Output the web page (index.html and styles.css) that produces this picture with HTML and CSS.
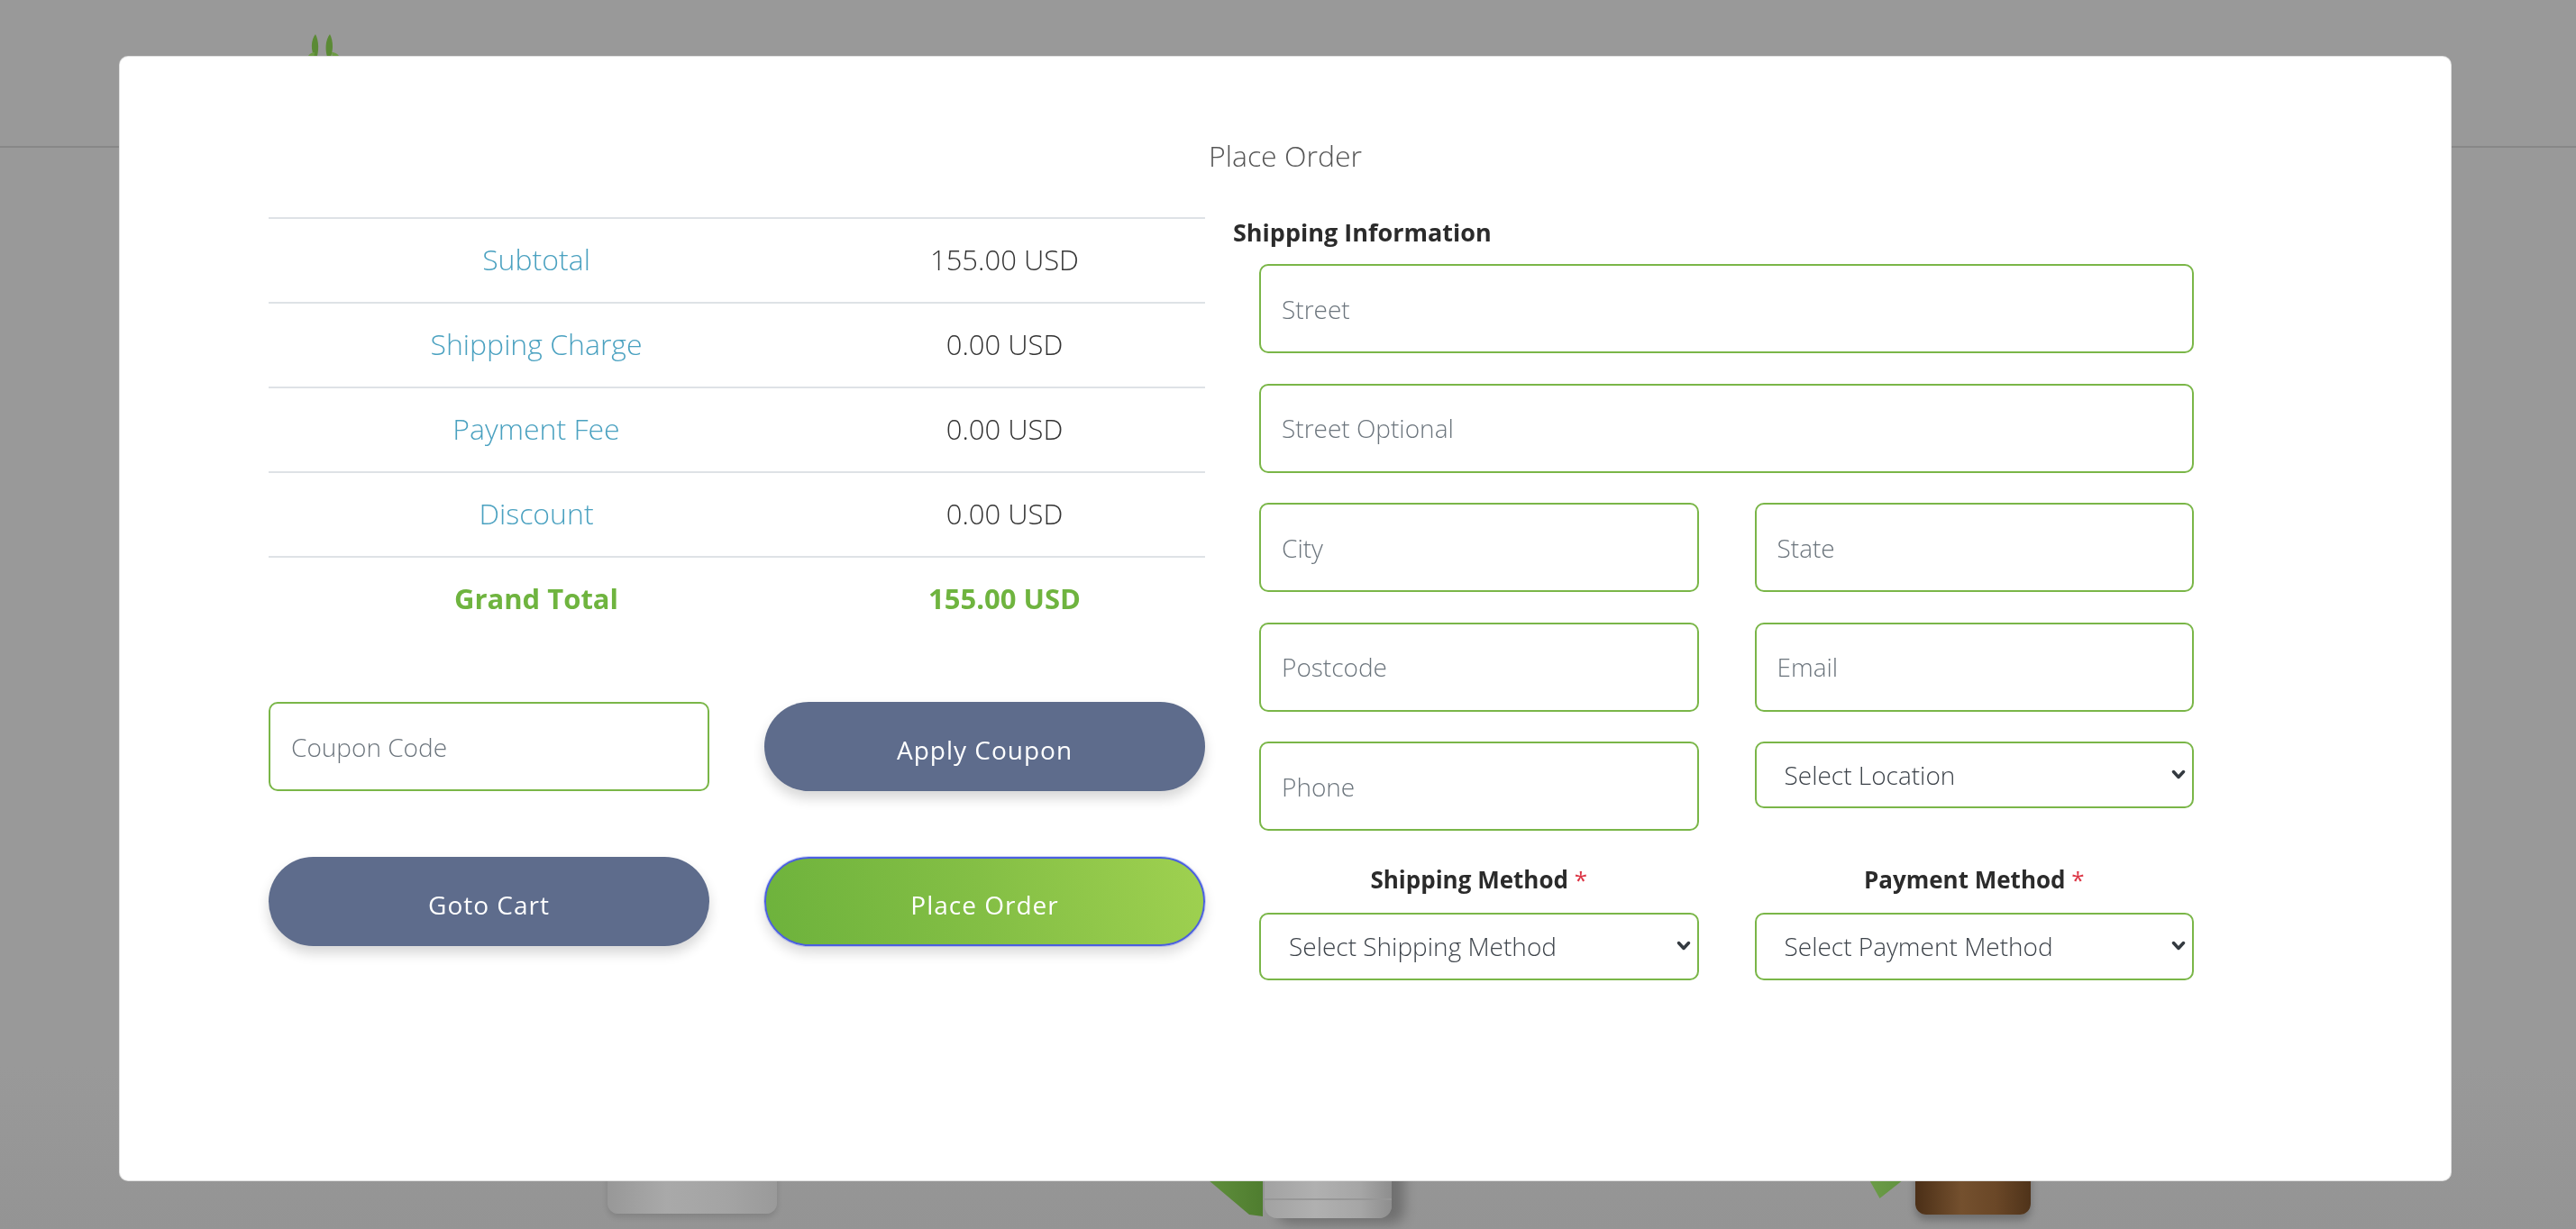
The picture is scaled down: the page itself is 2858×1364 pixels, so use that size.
FILE: index.html
```html
<!DOCTYPE html>
<html lang="en">
<head>
<meta charset="utf-8">
<title>Place Order</title>
<link rel="stylesheet" href="styles.css">
</head>
<body>
<div class="backdrop">
  <header class="site-header">
    <svg class="logo" width="60" height="30" viewBox="0 0 60 30">
      <path d="M20 30 C14 20 15 8 20 2 C24 10 24 20 21 30 Z" fill="#5b8a35"/>
      <path d="M34 30 C30 20 31 8 36 2 C40 10 40 20 36 30 Z" fill="#5b8a35"/>
      <path d="M10 30 C12 24 16 22 19 22 L18 30 Z" fill="#6c9a44"/>
      <path d="M48 30 C46 24 42 22 38 22 L39 30 Z" fill="#6c9a44"/>
    </svg>
  </header>
  <div class="products">
    <div class="pot pot-1"></div>
    <div class="leaf leaf-2"></div>
    <div class="pot pot-2"></div>
    <div class="leaf leaf-3"></div>
    <div class="pot pot-3"></div>
  </div>
</div>

<div class="modal-layer">
  <div class="modal">
    <h2 class="modal-title">Place Order</h2>
    <div class="modal-body">
      <section class="summary">
        <div class="totals">
          <div class="total-row"><span class="t-label">Subtotal</span><span class="t-value">155.00 USD</span></div>
          <div class="total-row"><span class="t-label">Shipping Charge</span><span class="t-value">0.00 USD</span></div>
          <div class="total-row"><span class="t-label">Payment Fee</span><span class="t-value">0.00 USD</span></div>
          <div class="total-row"><span class="t-label">Discount</span><span class="t-value">0.00 USD</span></div>
          <div class="total-row grand"><span class="t-label">Grand Total</span><span class="t-value">155.00 USD</span></div>
        </div>
        <div class="actions">
          <input class="field" type="text" placeholder="Coupon Code">
          <button class="btn btn-slate" type="button">Apply Coupon</button>
          <button class="btn btn-slate" type="button">Goto Cart</button>
          <button class="btn btn-green" type="button">Place Order</button>
        </div>
      </section>

      <section class="shipping">
        <h3 class="ship-title">Shipping Information</h3>
        <div class="fields">
          <input class="field" type="text" placeholder="Street">
          <input class="field" type="text" placeholder="Street Optional">
          <div class="pair">
            <input class="field" type="text" placeholder="City">
            <input class="field" type="text" placeholder="State">
          </div>
          <div class="pair">
            <input class="field" type="text" placeholder="Postcode">
            <input class="field" type="email" placeholder="Email">
          </div>
          <div class="pair">
            <input class="field" type="text" placeholder="Phone">
            <div class="select-wrap">
              <select class="select"><option>Select Location</option></select>
              <svg class="chev" width="16" height="12" viewBox="0 0 16 12"><path d="M2.5 2.5 L8 8.5 L13.5 2.5" fill="none" stroke="#343a40" stroke-width="3.5" stroke-linecap="round" stroke-linejoin="round"/></svg>
            </div>
          </div>
          <div class="pair methods">
            <div class="method">
              <label class="m-label">Shipping Method <span class="req">*</span></label>
              <div class="select-wrap">
                <select class="select"><option>Select Shipping Method</option></select>
                <svg class="chev" width="16" height="12" viewBox="0 0 16 12"><path d="M2.5 2.5 L8 8.5 L13.5 2.5" fill="none" stroke="#343a40" stroke-width="3.5" stroke-linecap="round" stroke-linejoin="round"/></svg>
              </div>
            </div>
            <div class="method">
              <label class="m-label">Payment Method <span class="req">*</span></label>
              <div class="select-wrap">
                <select class="select"><option>Select Payment Method</option></select>
                <svg class="chev" width="16" height="12" viewBox="0 0 16 12"><path d="M2.5 2.5 L8 8.5 L13.5 2.5" fill="none" stroke="#343a40" stroke-width="3.5" stroke-linecap="round" stroke-linejoin="round"/></svg>
              </div>
            </div>
          </div>
        </div>
      </section>
    </div>
  </div>
</div>
</body>
</html>
```

FILE: styles.css
```css
* { box-sizing: border-box; }

html, body {
  margin: 0;
  padding: 0;
}

body {
  width: 2858px;
  height: 1364px;
  overflow: hidden;
  background: #999999;
  font-family: "Open Sans", "Noto Sans", Arial, sans-serif;
  color: #333;
}

/* ---------- page behind the modal ---------- */
.backdrop {
  height: 1364px;
  display: flex;
  flex-direction: column;
}

.site-header {
  height: 164px;
  border-bottom: 2px solid #878787;
  padding: 36px 0 0 330px;
}

.logo { display: block; }

.products {
  position: relative;
  flex: 1;
  background: linear-gradient(to bottom, #999 0%, #999 85%, #949494 100%);
}

.pot, .leaf { position: absolute; }

.pot-1 {
  left: 674px;
  top: 1086px;
  width: 188px;
  height: 97px;
  border-radius: 0 0 12px 12px;
  background: linear-gradient(to right, #989898, #a9a9a9 35%, #a4a4a4 70%, #9a9a9a);
  box-shadow: 0 4px 6px rgba(0, 0, 0, 0.12);
}

.pot-2 {
  left: 1403px;
  top: 1086px;
  width: 141px;
  height: 102px;
  border-radius: 0 0 14px 14px;
  background:
    linear-gradient(to bottom, transparent 0, transparent 80px, #979797 80px, #979797 82px, transparent 82px),
    linear-gradient(to right, #a2a2a2, #b0b0b0 40%, #a6a6a6 75%, #8e8e8e);
  box-shadow: 14px 6px 14px rgba(0, 0, 0, 0.25);
}

.leaf-2 {
  left: 1301px;
  top: 1086px;
  width: 100px;
  height: 100px;
  background: linear-gradient(to right, #6a9a45, #4f7d2f);
  clip-path: polygon(20% 0, 100% 0, 100% 100%, 85% 98%, 40% 60%);
}

.pot-3 {
  left: 2125px;
  top: 1086px;
  width: 128px;
  height: 98px;
  border-radius: 0 0 12px 12px;
  background: linear-gradient(to right, #4b2f17, #74502e 40%, #6a4727 70%, #4f331a);
  box-shadow: 0 6px 8px rgba(0, 0, 0, 0.25);
}

.leaf-3 {
  left: 2036px;
  top: 1086px;
  width: 90px;
  height: 80px;
  background: linear-gradient(to right, #76a650, #5d8e3c);
  clip-path: polygon(20% 0, 100% 0, 100% 60%, 55% 100%, 40% 70%);
}

/* ---------- modal ---------- */
.modal-layer {
  position: fixed;
  inset: 0;
  padding-top: 62px;
}

.modal {
  margin-left: 132px;
  width: 2588px;
  height: 1249px;
  background: #fff;
  border: 1px solid rgba(0, 0, 0, 0.12);
  border-radius: 10px;
  padding-top: 87px;
}

.modal-title {
  margin: 0;
  text-align: center;
  font-size: 32px;
  line-height: 45px;
  font-weight: 300;
  color: #555;
}

.modal-body {
  display: flex;
  margin-top: 43px;
  padding-left: 165px;
  gap: 31px;
}

/* ---------- left: totals ---------- */
.summary {
  width: 1039px;
}

.totals {
  margin-top: 3px;
}

.total-row {
  display: flex;
  align-items: center;
  height: 94px;
  padding-bottom: 3px;
  border-top: 2px solid #dee2e6;
  font-size: 31px;
  font-weight: 300;
}

.t-label {
  width: 594px;
  text-align: center;
  color: #4aa1c0;
  font-size: 32px;
}

.t-value {
  flex: 1;
  text-align: center;
  color: #333;
}

.total-row.grand .t-label,
.total-row.grand .t-value {
  color: #6fb43f;
  font-weight: 700;
  font-size: 31px;
}

.actions {
  margin-top: 68px;
  display: grid;
  grid-template-columns: 489px 489px;
  column-gap: 61px;
  row-gap: 73px;
  grid-auto-rows: 99px;
}

/* ---------- fields ---------- */
.field {
  width: 100%;
  height: 99px;
  border: 2px solid #7ab648;
  border-radius: 10px;
  padding: 0 23px;
  font-family: inherit;
  font-size: 28px;
  font-weight: 300;
  color: #495057;
  background: #fff;
  outline: none;
}

.field::placeholder {
  color: #6c757d;
}

.btn {
  border: none;
  border-radius: 50px;
  font-family: inherit;
  font-size: 28px;
  font-weight: 400;
  letter-spacing: 1px;
  color: #fff;
  padding-top: 8px;
  cursor: pointer;
}

.btn-slate {
  background: #5e6c8c;
  box-shadow: 0 8px 14px rgba(0, 0, 0, 0.16);
}

.btn-green {
  background: linear-gradient(75deg, #6db23c 0%, #84bf45 50%, #9fd150 100%);
  border: 2px solid #4a5fe0;
  box-shadow: 0 0 0 1px rgba(74, 95, 224, 0.25), 0 8px 14px rgba(0, 0, 0, 0.14);
}

/* ---------- right: shipping ---------- */
.shipping {
  width: 1066px;
}

.ship-title {
  margin: 0 0 15px 0;
  font-size: 27px;
  line-height: 40px;
  font-weight: 700;
  color: #2b2b2b;
}

.fields {
  padding-left: 29px;
  display: flex;
  flex-direction: column;
  gap: 33.5px;
}

.pair {
  display: grid;
  grid-template-columns: 1fr 1fr;
  column-gap: 62px;
  align-items: start;
}

.select-wrap {
  position: relative;
}

.select {
  width: 100%;
  height: 74px;
  appearance: none;
  -webkit-appearance: none;
  border: 2px solid #7ab648;
  border-radius: 10px;
  background: #fff;
  padding: 0 40px 0 31px;
  font-family: inherit;
  font-size: 28px;
  font-weight: 300;
  color: #3d434a;
  outline: none;
}

.chev {
  position: absolute;
  right: 9px;
  top: 31px;
  pointer-events: none;
}

.methods {
  margin-top: -0.5px;
}

.method .select {
  height: 75px;
}

.m-label {
  display: block;
  text-align: center;
  font-size: 26px;
  line-height: 42px;
  font-weight: 700;
  color: #2b2b2b;
  margin-bottom: 15.5px;
}

.req {
  color: #dc3545;
  font-weight: 400;
}
```
